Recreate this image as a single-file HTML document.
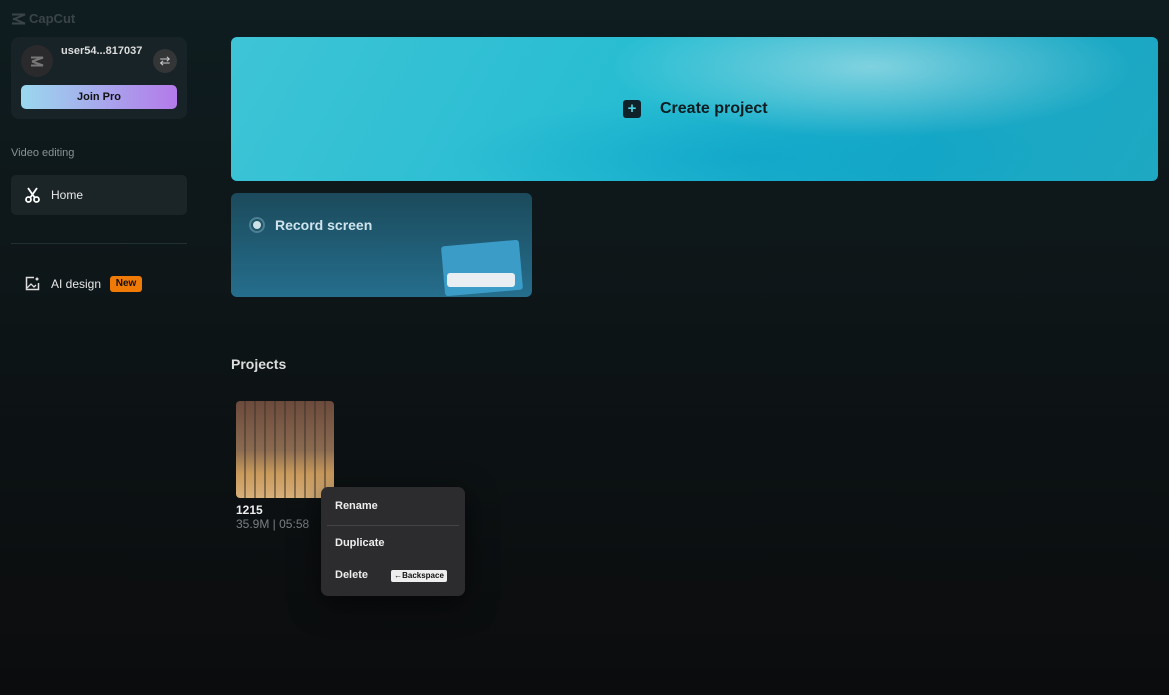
<!DOCTYPE html>
<html><head><meta charset="utf-8"><style>
*{margin:0;padding:0;box-sizing:border-box}
body{width:1169px;height:695px;overflow:hidden;font-family:"Liberation Sans",sans-serif;background:linear-gradient(180deg,#0f1d20 0%,#0d1416 50%,#0b0c0d 100%);color:#e6e6e6;position:relative}
.abs{position:absolute}
</style></head><body>
<div class="abs" style="left:11px;top:11px;font-size:13px;font-weight:bold;color:#3a4448;display:flex;align-items:center;gap:3px">
<svg width="15" height="12" viewBox="0 0 15 12"><path d="M1 1.5h13L2 6.5M1 10.5h13L2 5.5" stroke="#3a4448" stroke-width="2" fill="none"/></svg>CapCut</div>
<div class="abs" style="left:11px;top:37px;width:176px;height:82px;background:#172326;border-radius:8px"></div>
<div class="abs" style="left:21px;top:45px;width:32px;height:32px;border-radius:50%;background:#2a2a2c;display:flex;align-items:center;justify-content:center"><svg width="14" height="11" viewBox="0 0 14 11"><path d="M1 1.5h12L2 5.5M1 9.5h12L2 5.5" stroke="#777" stroke-width="2" fill="none"/></svg></div>
<div class="abs" style="left:61px;top:45px;font-size:11px;font-weight:bold;color:#ddd">user54...817037</div>
<div class="abs" style="left:153px;top:49px;width:24px;height:24px;border-radius:50%;background:#333537;color:#ccc;font-size:13px;text-align:center;line-height:24px">⇄</div>
<div class="abs" style="left:21px;top:85px;width:156px;height:24px;border-radius:5px;background:linear-gradient(90deg,#9ad8ee,#b47aea);color:#111;font-size:11px;font-weight:bold;text-align:center;line-height:24px">Join Pro</div>
<div class="abs" style="left:11px;top:147px;font-size:11px;color:#8a9396">Video editing</div>
<div class="abs" style="left:11px;top:175px;width:176px;height:40px;background:#1b2528;border-radius:5px"></div>
<svg class="abs" style="left:25px;top:187px" width="15" height="16" viewBox="0 0 15 16"><path d="M3 1l7 10M12 1L5 11" stroke="#fff" stroke-width="1.8" fill="none"/><circle cx="3.5" cy="12.5" r="2.5" stroke="#fff" stroke-width="1.8" fill="none"/><circle cx="11.5" cy="12.5" r="2.5" stroke="#fff" stroke-width="1.8" fill="none"/></svg>
<div class="abs" style="left:51px;top:188px;font-size:12px;color:#e8e8e8">Home</div>
<div class="abs" style="left:11px;top:243px;width:176px;height:1px;background:#22302f"></div>
<svg class="abs" style="left:25px;top:276px" width="15" height="15" viewBox="0 0 15 15"><path d="M9 1.5H1.5v12h12V7" stroke="#ddd" stroke-width="1.5" fill="none"/><path d="M2 12l4-4 3 3 2-2" stroke="#ddd" stroke-width="1.3" fill="none"/><circle cx="12" cy="3" r="1.5" fill="#ddd"/></svg>
<div class="abs" style="left:51px;top:277px;font-size:12px;color:#e8e8e8">AI design</div>
<div class="abs" style="left:110px;top:276px;width:32px;height:16px;background:#f07a06;border-radius:3px;color:#111;font-size:10px;font-weight:bold;text-align:center;line-height:16px">New</div>

<div class="abs" style="left:231px;top:37px;width:927px;height:144px;border-radius:6px;background:radial-gradient(ellipse 260px 70px at 640px 30px,rgba(170,225,232,.7),transparent),radial-gradient(ellipse 300px 60px at 520px 120px,rgba(10,160,200,.6),transparent),linear-gradient(120deg,#3ec4d6 0%,#26bcd2 45%,#17a8c6 75%,#1ea8c2 100%)"></div>
<div class="abs" style="left:623px;top:100px;width:18px;height:18px;background:#10212a;border-radius:3px;color:#4fd0e0;text-align:center;line-height:18px;font-size:15px;font-weight:bold">+</div>
<div class="abs" style="left:660px;top:100px;font-size:16px;font-weight:bold;color:#0c1c20">Create project</div>

<div class="abs" style="left:231px;top:193px;width:301px;height:104px;border-radius:6px;background:linear-gradient(180deg,#1b4a5b,#256e8d);overflow:hidden">
<div class="abs" style="left:212px;top:50px;width:78px;height:50px;background:#3c9cc8;border-radius:3px;transform:rotate(-5deg)"></div>
<div class="abs" style="left:216px;top:80px;width:68px;height:14px;background:#e8eef2;border-radius:3px"></div>
</div>
<div class="abs" style="left:249px;top:217px;width:16px;height:16px;border-radius:50%;border:2px solid #4e7f92"></div>
<div class="abs" style="left:253px;top:221px;width:8px;height:8px;border-radius:50%;background:#cfe0e6"></div>
<div class="abs" style="left:275px;top:217px;font-size:14px;font-weight:bold;color:#cfe4ec">Record screen</div>

<div class="abs" style="left:231px;top:356px;font-size:14px;font-weight:bold;color:#ddd">Projects</div>
<div class="abs" style="left:236px;top:401px;width:98px;height:97px;border-radius:4px;overflow:hidden;background:linear-gradient(180deg,#6b4a3c 0%,#8a6a50 50%,#c99a5c 75%,#d8b07a 100%)">
<div class="abs" style="left:0;top:0;width:98px;height:97px;background:repeating-linear-gradient(90deg,transparent 0 8px,rgba(60,50,40,.5) 8px 10px)"></div>
</div>
<div class="abs" style="left:236px;top:503px;font-size:12px;font-weight:bold;color:#eee">1215</div>
<div class="abs" style="left:236px;top:517px;font-size:12px;color:#7a7f82">35.9M | 05:58</div>

<div class="abs" style="left:321px;top:487px;width:144px;height:109px;background:#2c2c2e;border-radius:7px;box-shadow:0 8px 30px rgba(0,0,0,.6)"></div>
<div class="abs" style="left:335px;top:500px;font-size:11px;font-weight:bold;color:#eee">Rename</div>
<div class="abs" style="left:327px;top:525px;width:132px;height:1px;background:#444"></div>
<div class="abs" style="left:335px;top:537px;font-size:11px;font-weight:bold;color:#eee">Duplicate</div>
<div class="abs" style="left:335px;top:569px;font-size:11px;font-weight:bold;color:#eee">Delete</div>
<div class="abs" style="left:391px;top:570px;width:56px;height:12px;background:#eee;border-radius:2px;color:#111;font-size:8px;font-weight:bold;text-align:center;line-height:12px">←Backspace</div>
</body></html>
